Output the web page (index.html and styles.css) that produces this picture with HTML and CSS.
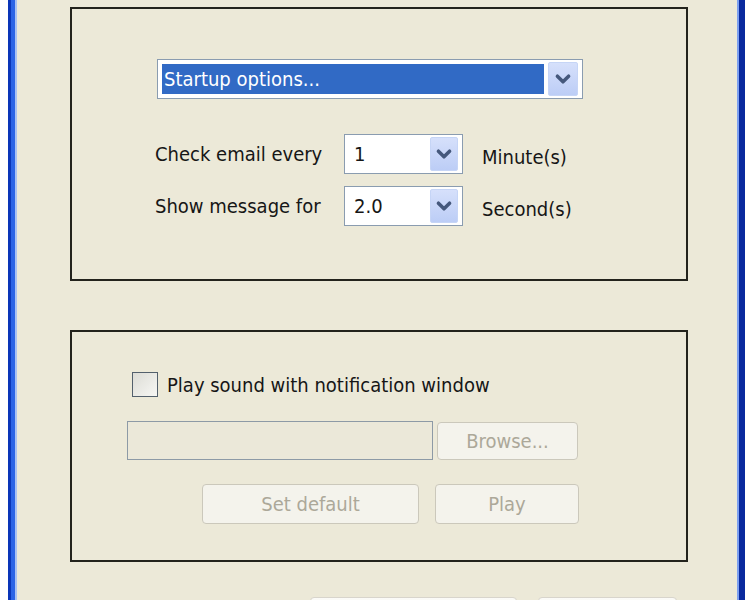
FILE: index.html
```html
<!DOCTYPE html>
<html>
<head>
<meta charset="utf-8">
<link rel="stylesheet" href="styles.css">
</head>
<body>
<div class="window">
  <div class="client">
    <div class="group group-top">
      <div class="combo combo-wide">
        <div class="combo-value selected">Startup options...</div>
        <div class="combo-btn">
          <svg viewBox="0 0 30 34" width="30" height="34"><polyline points="9,14 15,20 21,14" fill="none" stroke="#45587c" stroke-width="3.8" stroke-linecap="round" stroke-linejoin="round"/></svg>
        </div>
      </div>
      <div class="rows">
        <div class="label">Check email every</div>
        <div class="combo combo-small">
          <div class="combo-value">1</div>
          <div class="combo-btn small">
            <svg viewBox="0 0 28 34" width="28" height="34"><polyline points="8,14 14,20 20,14" fill="none" stroke="#45587c" stroke-width="3.8" stroke-linecap="round" stroke-linejoin="round"/></svg>
          </div>
        </div>
        <div class="unit">Minute(s)</div>
        <div class="label">Show message for</div>
        <div class="combo combo-small">
          <div class="combo-value">2.0</div>
          <div class="combo-btn small">
            <svg viewBox="0 0 28 34" width="28" height="34"><polyline points="8,14 14,20 20,14" fill="none" stroke="#45587c" stroke-width="3.8" stroke-linecap="round" stroke-linejoin="round"/></svg>
          </div>
        </div>
        <div class="unit">Second(s)</div>
      </div>
    </div>
    <div class="group group-bottom">
      <div class="check-row">
        <span class="checkbox"></span>
        <span class="check-label">Play sound with notification window</span>
      </div>
      <div class="file-row">
        <div class="textbox"></div>
        <button class="btn disabled browse">Browse...</button>
      </div>
      <div class="action-row">
        <button class="btn disabled set-default">Set default</button>
        <button class="btn disabled play">Play</button>
      </div>
    </div>
    <div class="dialog-buttons">
      <div class="dlg ok"></div>
      <div class="dlg cancel"></div>
    </div>
  </div>
</div>
</body>
</html>
```

FILE: styles.css
```css
* { box-sizing: border-box; }
html, body { margin: 0; padding: 0; }
body {
  background: #ffffff;
  width: 752px;
  height: 600px;
  overflow: hidden;
  font-family: "DejaVu Sans Condensed", "DejaVu Sans", sans-serif;
  font-stretch: condensed;
  font-size: 20px;
  color: #161616;
}
.window {
  margin-left: 8px;
  width: 737px;
  height: 600px;
  padding-left: 9px;
  padding-right: 8px;
  background:
    linear-gradient(to right, #0a35b8 0, #0a35b8 3px, #2c64e6 3px, #2c64e6 7px, #a9c2f4 7px, #a9c2f4 9px) left top / 9px 100% no-repeat,
    linear-gradient(to right, #7c9ff0 0, #7c9ff0 2px, #0a2a9e 2px, #0a2a9e 8px) right top / 8px 100% no-repeat;
}
.client {
  background: #ece9d8;
  height: 600px;
  overflow: hidden;
  padding-top: 7px;
  padding-left: 53px;
}
.group {
  width: 618px;
  border: 2px solid #23231c;
}
.group-top {
  height: 274px;
  padding-top: 50px;
  padding-left: 85px;
}
.group-bottom {
  margin-top: 49px;
  height: 232px;
  padding-top: 40px;
  padding-left: 60px;
}
.combo {
  display: flex;
  align-items: stretch;
  height: 40px;
  padding: 2px 4px;
  background: #ffffff;
  border: 1px solid #8a9cb0;
}
.combo-wide { width: 426px; }
.combo-small { width: 119px; }
.combo-value {
  flex: 1;
  display: flex;
  align-items: center;
  margin: 2px 4px 2px 0;
  line-height: 1;
  color: #161616;
}
.combo-value.selected {
  background: #316ac5;
  color: #ffffff;
  padding-left: 2px;
}
.combo-small .combo-value { padding-left: 5px; }
.combo-btn {
  width: 30px;
  border: 1px solid #c6d5f6;
  border-radius: 2px;
  background: linear-gradient(#d6e0fb, #bccdf6);
  display: flex;
  align-items: center;
  justify-content: center;
}
.combo-btn.small { width: 28px; }
.combo-btn svg { display: block; }
.rows {
  margin-top: 35px;
  margin-left: -2px;
  display: grid;
  grid-template-columns: 189px 119px auto;
  row-gap: 12px;
  align-items: center;
}
.label { line-height: 1; }
.unit { line-height: 1; padding-top: 6px; margin-left: 19px; }
.check-row {
  display: flex;
  align-items: center;
  height: 25px;
}
.checkbox {
  width: 26px;
  height: 25px;
  border: 1px solid #53606c;
  background: linear-gradient(135deg, #dcdcd5, #f7f7f4);
  margin-right: 9px;
}
.check-label { line-height: 1; }
.file-row {
  display: flex;
  margin-top: 24px;
  margin-left: -5px;
  gap: 4px;
}
.textbox {
  width: 306px;
  height: 39px;
  border: 1px solid #8d9aa6;
  background: #ebe8d9;
}
.btn {
  font-family: inherit;
  font-stretch: condensed;
  font-size: 20px;
  border-radius: 4px;
  padding: 0;
  display: block;
}
.btn.disabled {
  border: 1px solid #cbc8bb;
  background: #f4f3ec;
  color: #aca899;
}
.browse { width: 141px; height: 38px; margin-top: 1px; }
.action-row {
  display: flex;
  gap: 16px;
  margin-top: 24px;
  margin-left: 70px;
}
.set-default { width: 217px; height: 40px; }
.play { width: 144px; height: 40px; }
.dialog-buttons {
  display: flex;
  margin-top: 35px;
  margin-left: 240px;
  gap: 21px;
}
.dlg {
  height: 40px;
  border: 1px solid #d8d5cc;
  border-radius: 4px;
  background: linear-gradient(#fbfbf8, #eeede6);
}
.ok { width: 207px; }
.cancel { width: 139px; }
```
